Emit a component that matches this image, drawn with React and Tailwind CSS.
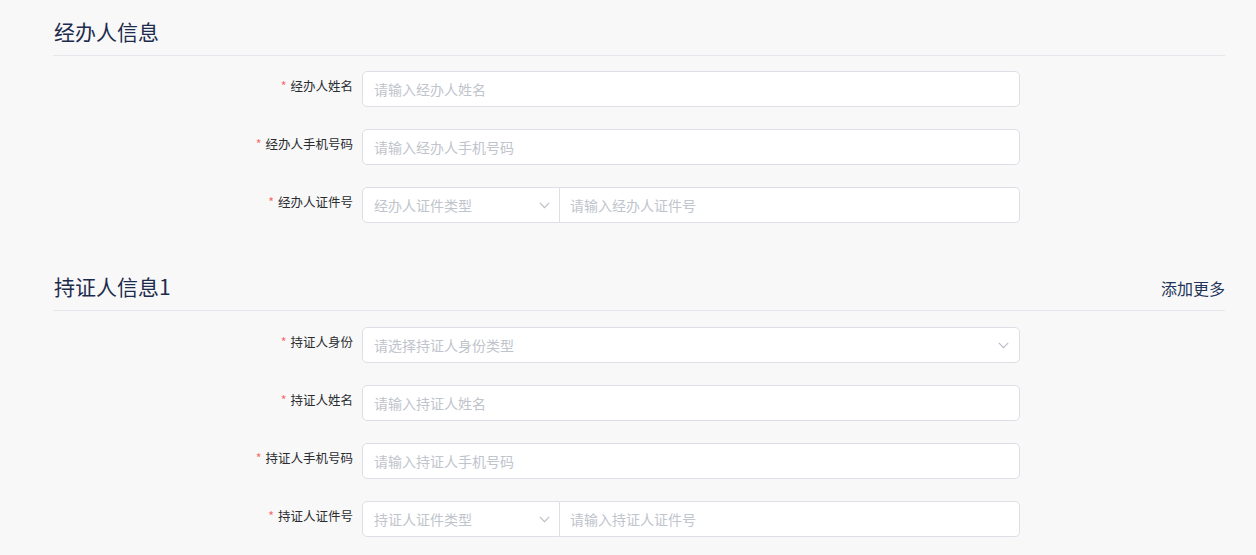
import React from "react";

const FONT = { fontFamily: '"Noto Sans CJK SC", "Noto Sans", sans-serif' };

function Chevron() {
  return (
    <svg width="11" height="7" viewBox="0 0 11 7" fill="none" className="shrink-0">
      <path d="M0.8 0.8 L5.5 5.6 L10.2 0.8" stroke="#b8bcc4" strokeWidth="1.1" />
    </svg>
  );
}

function Label({ text }) {
  return (
    <div className="w-[309px] shrink-0 pr-[9px] flex justify-end items-start">
      <div className="leading-[30px] text-[12.5px] text-[#2a2c30] whitespace-nowrap">
        <span className="text-[#f56c6c] mr-[4px]">*</span>
        {text}
      </div>
    </div>
  );
}

function TextInput({ placeholder }) {
  return (
    <input
      readOnly
      placeholder={placeholder}
      className="w-[658px] h-[36px] rounded-[5px] border border-[#dcdfe6] bg-white px-[11px] text-[14px] outline-none placeholder:text-[#c0c4cc]"
      style={FONT}
    />
  );
}

function Select({ placeholder, full }) {
  return (
    <div
      className={
        full
          ? "w-[658px] h-[36px] rounded-[5px] border border-[#dcdfe6] bg-white pl-[11px] pr-[10px] flex items-center justify-between"
          : "w-[198px] h-[36px] rounded-l-[5px] border border-[#dcdfe6] bg-white pl-[11px] pr-[9px] flex items-center justify-between"
      }
    >
      <span className="text-[14px] text-[#c0c4cc]">{placeholder}</span>
      <Chevron />
    </div>
  );
}

function IdRow({ label, selectPh, inputPh }) {
  return (
    <div className="flex h-[36px] mb-[22px]">
      <Label text={label} />
      <div className="flex w-[658px]">
        <Select placeholder={selectPh} />
        <input
          readOnly
          placeholder={inputPh}
          className="flex-1 min-w-0 h-[36px] rounded-r-[5px] border border-l-0 border-[#dcdfe6] bg-white px-[10px] text-[14px] outline-none placeholder:text-[#c0c4cc]"
          style={FONT}
        />
      </div>
    </div>
  );
}

function Row({ label, children }) {
  return (
    <div className="flex h-[36px] mb-[22px]">
      <Label text={label} />
      {children}
    </div>
  );
}

function Header({ title, extra }) {
  return (
    <div className="h-[56px] pt-[7px] border-b border-[#e6e7ec] flex items-center justify-between">
      <div className="text-[21px] text-[#1d2b4c] leading-[30px] pl-px">{title}</div>
      {extra ? (
        <div className="text-[16px] text-[#22345a] pt-[4px]">{extra}</div>
      ) : null}
    </div>
  );
}

export default function App() {
  return (
    <div className="w-full h-[555px] overflow-hidden bg-[#f8f8f8] pl-[53px] pr-[31px]" style={FONT}>
      <Header title="经办人信息" />
      <div className="pt-[15px]">
        <Row label="经办人姓名">
          <TextInput placeholder="请输入经办人姓名" />
        </Row>
        <Row label="经办人手机号码">
          <TextInput placeholder="请输入经办人手机号码" />
        </Row>
        <IdRow label="经办人证件号" selectPh="经办人证件类型" inputPh="请输入经办人证件号" />
      </div>
      <div className="mt-[32px]">
        <Header title="持证人信息1" extra="添加更多" />
      </div>
      <div className="pt-[16px]">
        <Row label="持证人身份">
          <Select placeholder="请选择持证人身份类型" full />
        </Row>
        <Row label="持证人姓名">
          <TextInput placeholder="请输入持证人姓名" />
        </Row>
        <Row label="持证人手机号码">
          <TextInput placeholder="请输入持证人手机号码" />
        </Row>
        <IdRow label="持证人证件号" selectPh="持证人证件类型" inputPh="请输入持证人证件号" />
      </div>
    </div>
  );
}
